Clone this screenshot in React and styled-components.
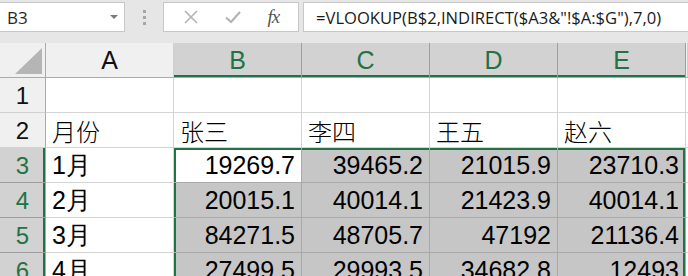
import React from 'react';
import styled, { createGlobalStyle, css } from 'styled-components';

const GREEN = '#217346';

const GlobalStyle = createGlobalStyle`
  html, body {
    margin: 0;
    padding: 0;
    background: #ffffff;
    overflow: hidden;
  }
`;

const columns = ['A', 'B', 'C', 'D', 'E'];

const rows = [
  { n: 1, cells: ['', '', '', '', ''] },
  { n: 2, cells: ['月份', '张三', '李四', '王五', '赵六'] },
  { n: 3, cells: ['1月', '19269.7', '39465.2', '21015.9', '23710.3'] },
  { n: 4, cells: ['2月', '20015.1', '40014.1', '21423.9', '40014.1'] },
  { n: 5, cells: ['3月', '84271.5', '48705.7', '47192', '21136.4'] },
  { n: 6, cells: ['4月', '27499.5', '29993.5', '34682.8', '12493'] },
];

const Page = styled.div`
  width: 688px;
  height: 276px;
  overflow: hidden;
  font-family: "Liberation Sans", Arial, sans-serif;
`;

const Toolbar = styled.div`
  height: 43px;
  background: #e6e6e6;
  display: flex;
  align-items: flex-start;
  padding-top: 2px;
  box-sizing: border-box;
`;

const NameBox = styled.div`
  width: 125px;
  height: 30px;
  box-sizing: border-box;
  background: #fff;
  border: 1px solid #c8c8c8;
  border-left: none;
  display: flex;
  align-items: center;
  justify-content: space-between;
  padding: 0 6px 0 7px;
  font-family: "Open Sans", "Noto Sans", sans-serif;
  font-size: 17px;
  color: #262626;
`;

const Caret = styled.span`
  width: 0;
  height: 0;
  border-left: 4px solid transparent;
  border-right: 4px solid transparent;
  border-top: 4px solid #7a7a7a;
`;

const Grip = styled.div`
  width: 38px;
  height: 30px;
  display: flex;
  flex-direction: column;
  align-items: center;
  justify-content: center;
  gap: 3px;
  span {
    width: 3px;
    height: 3px;
    background: #a6a6a6;
  }
`;

const FxBox = styled.div`
  width: 136px;
  height: 30px;
  box-sizing: border-box;
  background: #fff;
  border: 1px solid #c8c8c8;
  display: flex;
  align-items: center;
  justify-content: space-around;
  padding: 0 6px;
`;

const FxText = styled.span`
  font-family: "Liberation Serif", "DejaVu Serif", serif;
  font-style: italic;
  font-size: 19px;
  color: #555;
  letter-spacing: -1px;
`;

const FormulaBox = styled.div`
  flex: 1;
  margin-left: 4px;
  height: 30px;
  box-sizing: border-box;
  background: #fff;
  border: 1px solid #c8c8c8;
  border-right: none;
  display: flex;
  align-items: center;
  padding-left: 12px;
  font-family: "Open Sans", "Noto Sans", sans-serif;
  font-size: 16.6px;
  color: #1a1a1a;
  white-space: nowrap;
`;

const Sheet = styled.div`
  display: grid;
  grid-template-columns: 46px repeat(5, 128px) 1fr;
  grid-auto-rows: 35px;
`;

const Corner = styled.div`
  background: #f0f0f0;
  border-right: 1px solid #ababab;
  border-bottom: 1px solid #ababab;
  box-sizing: border-box;
  display: flex;
  align-items: flex-end;
  justify-content: flex-end;
  padding: 0 3px 3px 0;
  svg { display: block; }
`;

const ColHead = styled.div`
  box-sizing: border-box;
  background: ${p => (p.$sel ? '#d2d2d2' : '#f0f0f0')};
  color: ${p => (p.$sel ? GREEN : '#111')};
  border-right: 1px solid ${p => (p.$sel ? '#9e9e9e' : '#d0d0d0')};
  border-bottom: 1px solid #ababab;
  box-shadow: ${p => (p.$sel ? `inset 0 -2px 0 ${GREEN}` : 'none')};
  display: flex;
  align-items: center;
  justify-content: center;
  font-size: 25px;
  padding-top: 1px;
`;

const RowHead = styled.div`
  box-sizing: border-box;
  background: ${p => (p.$sel ? '#d2d2d2' : '#f0f0f0')};
  color: ${p => (p.$sel ? GREEN : '#111')};
  border-right: 1px solid #ababab;
  border-bottom: 1px solid ${p => (p.$sel ? '#9e9e9e' : '#d0d0d0')};
  box-shadow: ${p => (p.$sel ? `inset -2px 0 0 ${GREEN}` : 'none')};
  display: flex;
  align-items: center;
  justify-content: center;
  font-size: 24px;
  padding-top: 1px;
`;

const edge = p => {
  const s = [];
  if (p.$top) s.push(`inset 0 2px 0 ${GREEN}`);
  if (p.$left) s.push(`inset 2px 0 0 ${GREEN}`);
  if (p.$right) s.push(`inset -2px 0 0 ${GREEN}`);
  return s.length ? s.join(', ') : 'none';
};

const Cell = styled.div`
  box-sizing: border-box;
  background: ${p => (p.$sel && !p.$active ? '#c6c6c6' : '#fff')};
  border-right: 1px solid ${p => (p.$sel ? '#a9a9a9' : '#d4d4d4')};
  border-bottom: 1px solid ${p => (p.$sel ? '#a9a9a9' : '#d4d4d4')};
  box-shadow: ${edge};
  display: flex;
  align-items: flex-end;
  justify-content: ${p => (p.$num ? 'flex-end' : 'flex-start')};
  padding: 0 6px 3px 6px;
  font-size: 25px;
  line-height: 28px;
  color: #000;
  white-space: nowrap;
  ${p => p.$cjk && css`
    font-family: "Noto Sans CJK SC", sans-serif;
    font-weight: 300;
    font-size: 24px;
    line-height: 30px;
    padding-bottom: 1px;
  `}
`;

const Spill = styled.div`
  border-bottom: 1px solid #d4d4d4;
  box-sizing: border-box;
`;

const isNum = v => /^[0-9.]+$/.test(v);
const isCjkOnly = v => v && !/[0-9]/.test(v);

export default function App() {
  return (
    <Page>
      <GlobalStyle />
      <Toolbar>
        <NameBox>
          B3
          <Caret />
        </NameBox>
        <Grip>
          <span />
          <span />
          <span />
        </Grip>
        <FxBox>
          <svg width="16" height="16" viewBox="0 0 16 16">
            <path d="M2 2 L14 14 M14 2 L2 14" stroke="#b3b3b3" strokeWidth="1.6" fill="none" />
          </svg>
          <svg width="18" height="16" viewBox="0 0 18 16">
            <path d="M2 8.5 L7 13 L16 3" stroke="#b3b3b3" strokeWidth="2.2" fill="none" />
          </svg>
          <FxText>fx</FxText>
        </FxBox>
        <FormulaBox>=VLOOKUP(B$2,INDIRECT($A3&amp;"!$A:$G"),7,0)</FormulaBox>
      </Toolbar>
      <Sheet>
        <Corner>
          <svg width="27" height="26" viewBox="0 0 27 26">
            <polygon points="27,0 27,26 0,26" fill="#b5b5b5" />
          </svg>
        </Corner>
        {columns.map(c => (
          <ColHead key={c} $sel={c !== 'A'}>{c}</ColHead>
        ))}
        <ColHead />
        {rows.map(r => {
          const sel = r.n >= 3;
          return (
            <React.Fragment key={r.n}>
              <RowHead $sel={sel}>{r.n}</RowHead>
              {r.cells.map((v, i) => {
                const inSel = sel && i > 0;
                return (
                  <Cell
                    key={i}
                    $sel={inSel}
                    $active={r.n === 3 && i === 1}
                    $top={r.n === 3 && i > 0}
                    $left={inSel && i === 1}
                    $right={inSel && i === 4}
                    $num={isNum(v)}
                    $cjk={isCjkOnly(v)}
                  >
                    {v}
                  </Cell>
                );
              })}
              <Spill />
            </React.Fragment>
          );
        })}
      </Sheet>
    </Page>
  );
}
